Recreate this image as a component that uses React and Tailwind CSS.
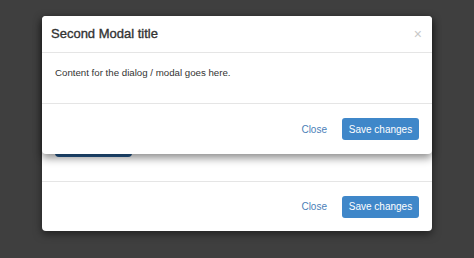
export default function App() {
  return (
    <div className="relative w-[474px] h-[258px] bg-[#3f3f3f] overflow-hidden font-['Liberation_Sans',Arial,sans-serif]">
      {/* back modal */}
      <div className="absolute left-[42px] top-[16px] w-[390px] h-[215px] bg-white rounded-[4px] shadow-[0_3px_8px_rgba(0,0,0,0.5)] flex flex-col">
        <div className="h-[117px]" />
        <div className="flex-1 px-[13px]">
          <div className="w-[77px] h-[24px] rounded-[4px] bg-[#265a8f]" />
        </div>
        <div className="h-[50px] border-t border-[#e5e5e5] flex items-center justify-end gap-[15px] pr-[13px]">
          <span className="text-[10px] text-[#4a80b8]">Close</span>
          <button className="w-[77px] h-[22px] rounded-[3px] bg-[#3f87c9] text-white text-[10px]">Save changes</button>
        </div>
      </div>

      {/* front modal */}
      <div className="absolute left-[42px] top-[16px] w-[390px] h-[138px] bg-white rounded-[4px] shadow-[0_4px_8px_rgba(0,0,0,0.45)] flex flex-col">
        <div className="h-[37px] border-b border-[#e5e5e5] flex items-center justify-between pl-[9px] pr-[10px]">
          <span className="text-[13px] text-[#333] [-webkit-text-stroke:0.35px_#333]">Second Modal title</span>
          <span className="text-[14px] leading-none text-[#c8c8c8]">×</span>
        </div>
        <div className="h-[51px] border-b border-[#e5e5e5] px-[13px] pt-[13px]">
          <p className="text-[9.7px] text-[#333]">Content for the dialog / modal goes here.</p>
        </div>
        <div className="flex-1 flex items-center justify-end gap-[15px] pr-[13px]">
          <span className="text-[10px] text-[#4a80b8]">Close</span>
          <button className="w-[77px] h-[22px] rounded-[3px] bg-[#3f87c9] text-white text-[10px]">Save changes</button>
        </div>
      </div>
    </div>
  );
}
